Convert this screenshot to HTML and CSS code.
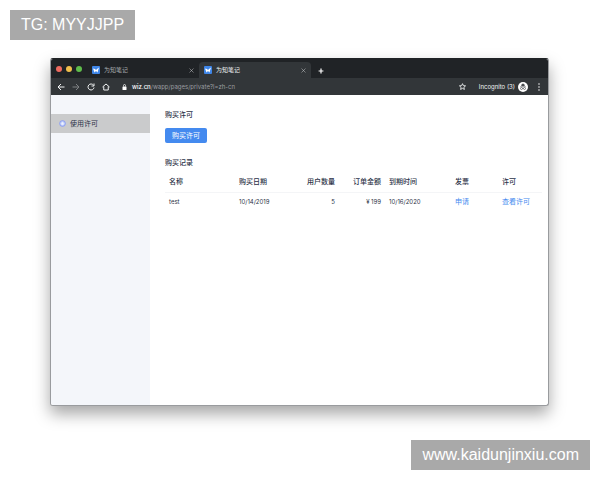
FILE: index.html
```html
<!DOCTYPE html>
<html lang="zh-CN">
  <head>
    <meta charset="UTF-8" />
    <meta name="viewport" content="width=device-width, initial-scale=1.0" />
    <title>为知笔记</title>
    <link rel="stylesheet" href="styles.css">
  </head>
  <body>
    <div class="tag tag-top">TG: MYYJJPP</div>

    <div class="window">
      <div class="tabs">
        <div class="lights">
          <span class="light red"></span>
          <span class="light yellow"></span>
          <span class="light green"></span>
        </div>
        <div class="tab">
          <svg class="logo" viewBox="0 0 16 16"><rect width="16" height="16" rx="2" fill="#3f86e8"/><path d="M2 5l3 8 3-3 3 3 3-10-4 3-2 2-2-2z" fill="#fff"/></svg>
          <span class="tab-title">为知笔记</span>
          <button class="tab-close" aria-label="关闭"><svg viewBox="0 0 10 10"><path d="M1 1l8 8M9 1l-8 8"/></svg></button>
        </div>
        <div class="tab active">
          <svg class="logo" viewBox="0 0 16 16"><rect width="16" height="16" rx="2" fill="#3f86e8"/><path d="M2 5l3 8 3-3 3 3 3-10-4 3-2 2-2-2z" fill="#fff"/></svg>
          <span class="tab-title">为知笔记</span>
          <button class="tab-close" aria-label="关闭"><svg viewBox="0 0 10 10"><path d="M1 1l8 8M9 1l-8 8"/></svg></button>
        </div>
        <button class="new-tab" aria-label="新标签页"><svg viewBox="0 0 10 10"><path d="M5 1v8M1 5h8"/></svg></button>
      </div>

      <div class="toolbar">
        <button class="tool" aria-label="后退"><svg viewBox="0 0 16 16"><path d="M15 8H2M8 2L2 8l6 6"/></svg></button>
        <button class="tool dim" aria-label="前进"><svg viewBox="0 0 16 16"><path d="M1 8h13M8 2l6 6-6 6"/></svg></button>
        <button class="tool" aria-label="刷新"><svg viewBox="0 0 16 16"><path d="M13 4.500A6 6 0 1 0 14 9M14 1v5H9"/></svg></button>
        <button class="tool" aria-label="主页"><svg viewBox="0 0 16 16"><path d="M1 8l7-6 7 6M3.500 7v7h9V7"/></svg></button>
        <div class="address">
          <svg class="lock" viewBox="0 0 10 12"><rect x="1" y="5" width="8" height="7" rx="1" fill="#fff"/><path d="M3 5V3a2 2 0 0 1 4 0v2" fill="none" stroke="#fff" stroke-width="1.500"/></svg>
          <span class="url"><b>wiz.cn</b>/wapp/pages/private?l=zh-cn</span>
        </div>
        <button class="tool star" aria-label="收藏"><svg viewBox="0 0 16 16"><path d="M8 1.500l2 4.500 5 .5-3.800 3.300 1.100 4.900L8 12.200l-4.300 2.500 1.100-4.900L1 6.500 6 6z"/></svg></button>
        <span class="incognito">Incognito (3)</span>
        <svg class="avatar" viewBox="0 0 20 20"><circle cx="10" cy="10" r="10" fill="#fff"/><path d="M4 9.500h12M7 8l1-4h4l1 4z" fill="#4a4d50" stroke="#4a4d50"/><g fill="none" stroke="#4a4d50" stroke-width="1.300"><circle cx="7" cy="13" r="2"/><circle cx="13" cy="13" r="2"/><path d="M9 13h2"/></g></svg>
        <button class="menu" aria-label="菜单"><svg viewBox="0 0 4 16"><g fill="#fff"><circle cx="2" cy="2" r="1.500"/><circle cx="2" cy="8" r="1.500"/><circle cx="2" cy="14" r="1.500"/></g></svg></button>
      </div>

      <div class="page">
        <nav class="sidebar">
          <a class="nav-item" href="#license">
            <svg viewBox="0 0 16 16"><circle cx="8" cy="8" r="6.500" fill="#c5d2fa" stroke="#8296f2" stroke-width="2"/><path d="M5.500 7h5v4h-5zM6.500 7V5h3v2" fill="#eef2ff"/></svg>
            使用许可
          </a>
        </nav>

        <main class="content" id="license">
          <h2>购买许可</h2>
          <button class="buy">购买许可</button>
          <h2>购买记录</h2>
          <table>
            <thead>
              <tr>
                <th class="name">名称</th>
                <th class="date">购买日期</th>
                <th class="users">用户数量</th>
                <th class="amount">订单金额</th>
                <th class="expire">到期时间</th>
                <th class="invoice">发票</th>
                <th class="license">许可</th>
              </tr>
            </thead>
            <tbody>
              <tr>
                <td>test</td>
                <td>10/14/2019</td>
                <td class="users">5</td>
                <td class="amount">¥ 199</td>
                <td>10/16/2020</td>
                <td><a href="#invoice">申请</a></td>
                <td><a href="#view">查看许可</a></td>
              </tr>
            </tbody>
          </table>
        </main>
      </div>
    </div>

    <div class="tag tag-bottom">www.kaidunjinxiu.com</div>
  </body>
</html>
```
FILE: styles.css
```css
* {
  box-sizing: border-box;
}

body {
  margin: 0;
  padding: 58px 51px 74px 50px;
  min-height: 100vh;
  display: flex;
  background-color: #fff;
  font-family: Inter, "Noto Sans CJK SC", sans-serif;
  font-size: 7px;
  line-height: 10px;
  color: #2c3348;
}

button {
  border: none;
  padding: 0;
  background: none;
  font: inherit;
  cursor: pointer;
}

svg {
  display: block;
}

/* Corner labels */
.tag {
  position: fixed;
  padding: 0 11px;
  background-color: #a9a9a9;
  color: #fff;
  font-family: "Liberation Sans", Arial, sans-serif;
  font-size: 16px;
  line-height: 30px;
}

.tag-top {
  top: 10px;
  left: 10px;
}

.tag-bottom {
  right: 10px;
  bottom: 10px;
}

/* Browser window */
.window {
  flex: 1;
  min-width: 0;
  display: flex;
  flex-direction: column;
  border: 1px solid #999b9e;
  border-top-color: #202326;
  border-radius: 3px;
  overflow: hidden;
  background-color: #fff;
  box-shadow: 0 8px 16px rgba(0, 0, 0, 0.35);
}

.tabs {
  display: flex;
  align-items: flex-end;
  height: 19px;
  background-color: #202326;
}

.lights {
  display: flex;
  align-self: center;
  gap: 4px;
  padding: 0 5px;
}

.light {
  width: 6px;
  height: 6px;
  border-radius: 50%;
}

.red {
  background-color: #ed6a5f;
}

.yellow {
  background-color: #f0bf4c;
}

.green {
  background-color: #5fbd4b;
}

.tab {
  display: flex;
  align-items: center;
  width: 112px;
  height: 16px;
  padding: 0 5px;
  color: #a8abae;
}

.tab.active {
  background-color: #323639;
  border-radius: 4px 4px 0 0;
  color: #f1f3f4;
}

.logo {
  width: 8px;
  height: 8px;
  margin-right: 4px;
}

.tab-title {
  flex: 1;
  font-size: 6px;
}

.tab-close svg {
  width: 5px;
  height: 5px;
}

.tab-close path {
  stroke: #c8cacc;
  stroke-width: 1;
}

.new-tab {
  align-self: center;
  margin: 4px 0 0 7px;
}

.new-tab svg {
  width: 6px;
  height: 6px;
}

.new-tab path {
  stroke: #fff;
  stroke-width: 2;
}

.toolbar {
  display: flex;
  align-items: center;
  gap: 7px;
  height: 17px;
  padding: 0 8px 0 6px;
  background-color: #323639;
  color: #f1f3f4;
}

.tool svg {
  width: 8px;
  height: 8px;
  fill: none;
  stroke: #f1f3f4;
  stroke-width: 2;
}

.tool.dim svg {
  stroke: #7e8184;
}

.tool.star svg {
  width: 7px;
  height: 7px;
}

.address {
  flex: 1;
  display: flex;
  align-items: center;
  gap: 5px;
  padding-left: 5px;
}

.lock {
  width: 5px;
  height: 6px;
}

.url {
  font-size: 6px;
  color: #9a9da0;
}

.url b {
  font-weight: 500;
  color: #fff;
}

.incognito {
  margin-left: 6px;
  font-size: 6px;
}

.avatar {
  width: 10px;
  height: 10px;
  margin: 0 3px 0 -4px;
}

.menu svg {
  width: 2px;
  height: 8px;
}

/* Page */
.page {
  flex: 1;
  display: flex;
}

.sidebar {
  flex: none;
  width: 99px;
  padding-top: 19px;
  background-color: #f4f6fa;
}

.nav-item {
  display: flex;
  align-items: center;
  gap: 4px;
  height: 19px;
  padding-left: 8px;
  background-color: #cacbcc;
  color: #2c3348;
  text-decoration: none;
}

.nav-item svg {
  width: 7px;
  height: 7px;
}

.content {
  flex: 1;
  min-width: 0;
  padding: 15px 6px 0 15px;
}

h2 {
  margin: 0;
  font-size: 7px;
  line-height: 10px;
  font-weight: 500;
}

.buy {
  display: block;
  height: 15px;
  margin: 8px 0 15px;
  padding: 0 7px;
  border-radius: 2px;
  background-color: #448aef;
  color: #fff;
}

table {
  width: 100%;
  margin-top: 5px;
  border-collapse: collapse;
  table-layout: fixed;
}

th,
td {
  height: 19px;
  padding: 0 4px;
  text-align: left;
  white-space: nowrap;
}

th {
  font-weight: 500;
  border-bottom: 1px solid #f4f5f7;
}

td {
  font-size: 6px;
}

td a {
  font-size: 7px;
  color: #448aef;
  text-decoration: none;
}

.users,
.amount {
  text-align: right;
}

.name {
  width: 70px;
}

.date {
  width: 68px;
}

.users {
  width: 36px;
}

.amount {
  width: 46px;
}

.expire {
  width: 66px;
}

.invoice {
  width: 47px;
}
```
